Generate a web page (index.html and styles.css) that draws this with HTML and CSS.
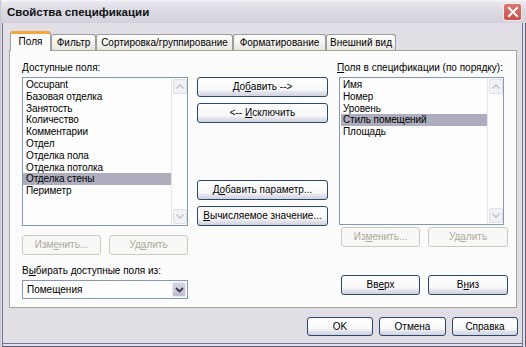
FILE: index.html
```html
<!DOCTYPE html>
<html>
<head>
<meta charset="utf-8">
<link rel="stylesheet" href="styles.css">
</head>
<body>
<div class="window">
  <div class="titlebar">
    <span class="title">Свойства спецификации</span>
    <span class="close"><svg width="12" height="12" viewBox="0 0 12 12"><path d="M2 2 L10 10 M10 2 L2 10" stroke="#ffffff" stroke-width="2" fill="none" stroke-linecap="square"/></svg></span>
  </div>
  <div class="client">
    <div class="tabs">
      <div class="tab active t1">Поля</div>
      <div class="tab t2">Фильтр</div>
      <div class="tab t3">Сортировка/группирование</div>
      <div class="tab t4">Форматирование</div>
      <div class="tab t5">Внешний вид</div>
    </div>
    <div class="panel">
      <div class="col left">
        <div class="label first"><u>Д</u>оступные поля:</div>
        <div class="listbox lb-left">
          <div class="items">
            <div class="item">Occupant</div>
            <div class="item">Базовая отделка</div>
            <div class="item">Занятость</div>
            <div class="item">Количество</div>
            <div class="item">Комментарии</div>
            <div class="item">Отдел</div>
            <div class="item">Отделка пола</div>
            <div class="item">Отделка потолка</div>
            <div class="item sel">Отделка стены</div>
            <div class="item">Периметр</div>
          </div>
          <div class="scroll">
            <div class="sb"><svg width="8" height="5" viewBox="0 0 8 5"><path d="M0.5 4.5 L4 1 L7.5 4.5" stroke="#c6c6d0" stroke-width="1.6" fill="none"/></svg></div>
            <div class="sb"><svg width="8" height="5" viewBox="0 0 8 5"><path d="M0.5 0.5 L4 4 L7.5 0.5" stroke="#c6c6d0" stroke-width="1.6" fill="none"/></svg></div>
          </div>
        </div>
        <div class="btnrow lrow">
          <div class="btn dis w79">Изм<u>е</u>нить...</div>
          <div class="btn dis w79">Уд<u>а</u>лить</div>
        </div>
        <div class="label second">В<u>ы</u>бирать доступные поля из:</div>
        <div class="combo">
          <span class="combo-text">Помещения</span>
          <span class="combo-btn"><svg width="9" height="6" viewBox="0 0 9 6"><path d="M1 1 L4.5 4.5 L8 1" stroke="#3c3c50" stroke-width="1.8" fill="none"/></svg></span>
        </div>
      </div>
      <div class="col mid">
        <div class="btn mbtn">До<u>б</u>авить --&gt;</div>
        <div class="btn mbtn gap6">&lt;--&nbsp;<u>И</u>сключить</div>
        <div class="btn mbtn gap57">Д<u>о</u>бавить параметр...</div>
        <div class="btn mbtn gap6"><u>В</u>ычисляемое значение...</div>
      </div>
      <div class="col right">
        <div class="label first rlabel"><u>П</u>оля в спецификации (по порядку):</div>
        <div class="listbox lb-right">
          <div class="items">
            <div class="item">Имя</div>
            <div class="item">Номер</div>
            <div class="item">Уровень</div>
            <div class="item sel">Стиль помещений</div>
            <div class="item">Площадь</div>
          </div>
          <div class="scroll">
            <div class="sb"><svg width="8" height="5" viewBox="0 0 8 5"><path d="M0.5 4.5 L4 1 L7.5 4.5" stroke="#c6c6d0" stroke-width="1.6" fill="none"/></svg></div>
            <div class="sb"><svg width="8" height="5" viewBox="0 0 8 5"><path d="M0.5 0.5 L4 4 L7.5 0.5" stroke="#c6c6d0" stroke-width="1.6" fill="none"/></svg></div>
          </div>
        </div>
        <div class="btnrow rrow1">
          <div class="btn dis w79">Из<u>м</u>енить...</div>
          <div class="btn dis w80">Уд<u>а</u>лить</div>
        </div>
        <div class="btnrow rrow2">
          <div class="btn w79">Вв<u>е</u>рх</div>
          <div class="btn w80">В<u>н</u>из</div>
        </div>
      </div>
    </div>
    <div class="footer">
      <div class="btn fbtn w66">OK</div>
      <div class="btn fbtn w67">Отмена</div>
      <div class="btn fbtn w66">Справка</div>
    </div>
  </div>
</div>
</body>
</html>
```

FILE: styles.css
```css
html, body {
  margin: 0;
  padding: 0;
  background: #e1dee5;
}
body {
  font-family: "Liberation Sans", Arial, sans-serif;
  font-size: 10px;
  color: #000;
}
u {
  text-decoration: underline;
  text-underline-offset: 1px;
}
.window {
  width: 526px;
  height: 347px;
  display: flex;
  flex-direction: column;
  background: #e1dee5;
  overflow: hidden;
}
.titlebar {
  height: 23px;
  flex: none;
  box-sizing: border-box;
  display: flex;
  align-items: center;
  justify-content: space-between;
  padding: 1px 4px 0 7px;
  background: linear-gradient(#eeedf3, #dcdbe4 40%, #d3d2dc);
  box-shadow: inset 1px 0 #c8c8d2, inset 0 1px #f4f4f8;
}
.title {
  font-weight: bold;
  font-size: 11.5px;
  color: #111;
}
.close {
  width: 19px;
  height: 18px;
  box-sizing: border-box;
  border: 1px solid #f2eeee;
  border-radius: 3px;
  background: linear-gradient(#dc7670, #c9504a);
  display: flex;
  align-items: center;
  justify-content: center;
}
.client {
  flex: 1;
  box-sizing: border-box;
  padding: 8px 8px 0 9px;
  box-shadow:
    inset 1px 0 #c8c8d2,
    inset 2px 0 #e1dee5,
    inset 3px 0 #72728e,
    inset -1px 0 #5e5e7a,
    inset -3px 0 #e1dee5,
    inset -4px 0 #72728e,
    inset 0 -1px #5e5e7a,
    inset 0 -3px #e1dee5,
    inset 0 -4px #72728e;
}
.tabs {
  display: flex;
  align-items: flex-end;
  height: 19px;
  margin-left: 1px;
  position: relative;
  z-index: 1;
}
.tab {
  height: 16px;
  box-sizing: border-box;
  border: 1px solid #9a9c9e;
  border-bottom: none;
  border-radius: 3px 3px 0 0;
  background: linear-gradient(#fefefe, #f2f1ee 60%, #e6e5e0);
  text-align: center;
  line-height: 15px;
  white-space: nowrap;
}
.tab.active {
  height: 20px;
  margin-bottom: -1px;
  background: #fcfcfc;
  border-top: 3px solid #f2a63c;
  line-height: 16px;
}
.t1 { width: 41px; }
.t2 { width: 45px; }
.t3 { width: 137px; }
.t4 { width: 93px; }
.t5 { width: 70px; }
.panel {
  width: 508px;
  height: 258px;
  box-sizing: border-box;
  border: 1px solid #a7a497;
  background: #fcfcfc;
  display: flex;
  padding-left: 12px;
}
.col {
  display: flex;
  flex-direction: column;
}
.left { width: 166px; margin-right: 9px; }
.mid { width: 131px; margin-right: 11px; padding-top: 26px; }
.right { width: 169px; }
.label {
  height: 12px;
  line-height: 12px;
  white-space: nowrap;
}
.label.first { margin-top: 11px; }
.label.second { margin-top: 10px; }
.rlabel { margin-left: -2px; }
.listbox {
  margin-top: 3px;
  box-sizing: border-box;
  border: 1px solid #8298b4;
  background: #fdfdfd;
  display: flex;
}
.lb-left { width: 166px; height: 149px; }
.lb-right { width: 165px; height: 148px; }
.items {
  flex: 1;
  padding-top: 1px;
}
.lb-right .items { padding-left: 1px; }
.item {
  height: 11.8px;
  line-height: 11.8px;
  padding-left: 3px;
  white-space: nowrap;
  letter-spacing: -0.1px;
}
.lb-right .item { padding-left: 2px; }
.item.sel {
  background: #adadbd;
}
.scroll {
  width: 16px;
  box-sizing: border-box;
  border-left: 1px solid #e6e6ec;
  padding: 1px;
  display: flex;
  flex-direction: column;
  justify-content: space-between;
}
.sb {
  width: 14px;
  height: 15px;
  box-sizing: border-box;
  border: 1px solid #dedee6;
  border-radius: 2px;
  background: #f2f2f6;
  display: flex;
  align-items: center;
  justify-content: center;
}
.btnrow {
  display: flex;
  gap: 8px;
}
.lrow { margin-top: 9px; }
.rrow1 { margin-top: 2px; margin-left: 2px; }
.rrow2 { margin-top: 28px; margin-left: 2px; }
.btn {
  height: 20px;
  box-sizing: border-box;
  border: 1px solid #2a4770;
  border-radius: 3px;
  background: linear-gradient(#fefefe, #f8f8fa 65%, #e4e4ec 78%, #d2d2de);
  display: flex;
  align-items: center;
  justify-content: center;
  white-space: nowrap;
  padding-bottom: 1px;
}
.btn.dis {
  border-color: #cbc8bc;
  background: #f8f8f6;
  color: #aca899;
}
.w79 { width: 79px; }
.w80 { width: 80px; }
.w66 { width: 66px; }
.w67 { width: 67px; }
.mbtn { width: 131px; }
.gap6 { margin-top: 6px; }
.gap57 { margin-top: 57px; }
.combo {
  margin-top: 3px;
  width: 166px;
  height: 19px;
  box-sizing: border-box;
  border: 1px solid #8298b4;
  background: #fdfdfd;
  display: flex;
  align-items: center;
  justify-content: space-between;
  padding: 1px;
}
.combo-text {
  padding-left: 3px;
}
.combo-btn {
  width: 14px;
  height: 15px;
  box-sizing: border-box;
  border: 1px solid #e8e8f0;
  border-radius: 2px;
  background: linear-gradient(#d6d6e2, #bebece);
  display: flex;
  align-items: center;
  justify-content: center;
}
.footer {
  display: flex;
  justify-content: flex-end;
  gap: 6px;
  margin-top: 9px;
}
.fbtn {
  height: 19px;
}
```
